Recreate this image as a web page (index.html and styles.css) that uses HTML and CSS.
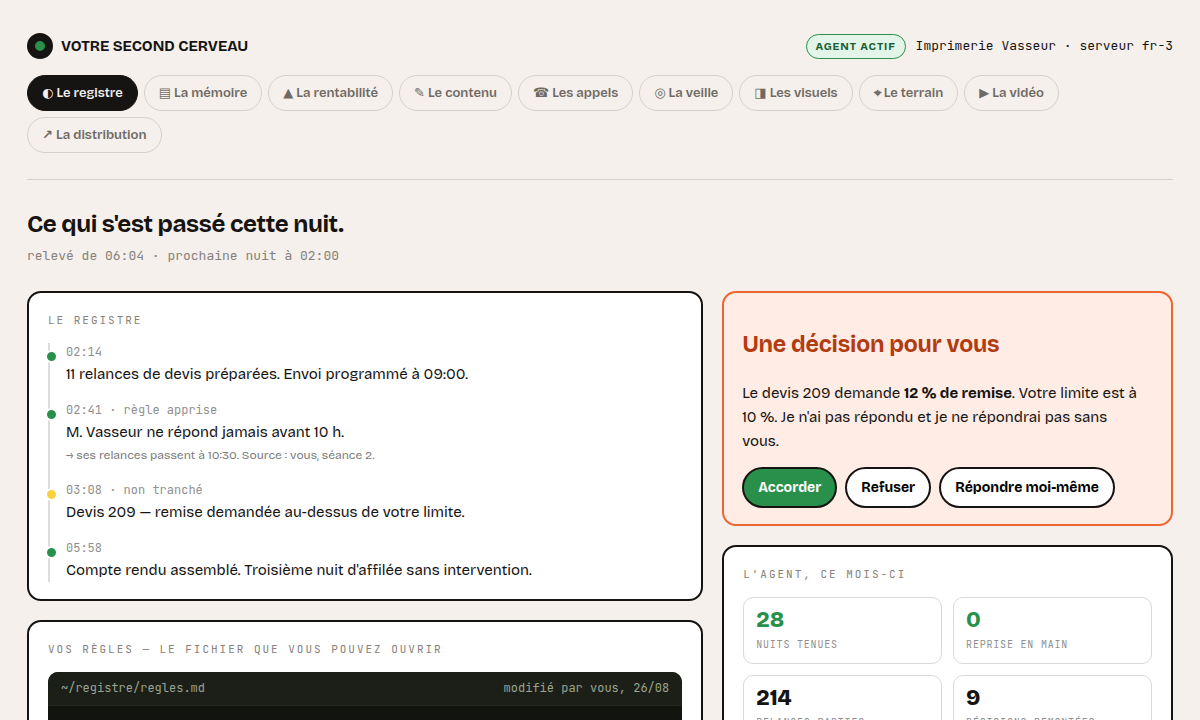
FILE: index.html
```html
<!DOCTYPE html>
<html lang="fr">
<head>
    <meta charset="UTF-8">
    <meta name="viewport" content="width=device-width, initial-scale=1.0">
    <title>Votre second cerveau</title>
    <link rel="stylesheet" href="styles.css">
</head>
<body>
    <header class="top">
        <div class="brand"><span class="logo"></span>VOTRE SECOND CERVEAU</div>
        <div class="status">
            <span class="badge">AGENT ACTIF</span>
            <span class="server">Imprimerie Vasseur · serveur fr-3</span>
        </div>
    </header>

    <nav class="tabs">
        <button class="tab active" type="button">◐ Le registre</button>
        <button class="tab" type="button">▤ La mémoire</button>
        <button class="tab" type="button">▲ La rentabilité</button>
        <button class="tab" type="button">✎ Le contenu</button>
        <button class="tab" type="button">☎ Les appels</button>
        <button class="tab" type="button">◎ La veille</button>
        <button class="tab" type="button">◨ Les visuels</button>
        <button class="tab" type="button">⌖ Le terrain</button>
        <button class="tab" type="button">▶ La vidéo</button>
        <button class="tab" type="button">↗ La distribution</button>
    </nav>

    <main>
        <h1>Ce qui s'est passé cette nuit.</h1>
        <p class="subtitle">relevé de 06:04 · prochaine nuit à 02:00</p>

        <div class="grid">
            <div class="column">
                <section class="card">
                    <h3 class="label">LE REGISTRE</h3>
                    <ol class="timeline">
                        <li class="event">
                            <time>02:14</time>
                            <p>11 relances de devis préparées. Envoi programmé à 09:00.</p>
                        </li>
                        <li class="event">
                            <time>02:41 · règle apprise</time>
                            <p>M. Vasseur ne répond jamais avant 10 h.</p>
                            <small>→ ses relances passent à 10:30. Source : vous, séance 2.</small>
                        </li>
                        <li class="event pending">
                            <time>03:08 · non tranché</time>
                            <p>Devis 209 — remise demandée au-dessus de votre limite.</p>
                        </li>
                        <li class="event">
                            <time>05:58</time>
                            <p>Compte rendu assemblé. Troisième nuit d'affilée sans intervention.</p>
                        </li>
                    </ol>
                </section>

                <section class="card">
                    <h3 class="label">VOS RÈGLES — LE FICHIER QUE VOUS POUVEZ OUVRIR</h3>
                    <div class="file">
                        <div class="file-head">
                            <span>~/registre/regles.md</span>
                            <span>modifié par vous, 26/08</span>
                        </div>
                        <div class="file-body"></div>
                    </div>
                </section>
            </div>

            <div class="column">
                <section class="card decision">
                    <h2>Une décision pour vous</h2>
                    <p>Le devis 209 demande <b>12 % de remise</b>. Votre limite est à 10 %. Je n'ai pas répondu et je ne répondrai pas sans vous.</p>
                    <div class="actions">
                        <button class="btn primary" type="button">Accorder</button>
                        <button class="btn" type="button">Refuser</button>
                        <button class="btn" type="button">Répondre moi-même</button>
                    </div>
                </section>

                <section class="card">
                    <h3 class="label">L'AGENT, CE MOIS-CI</h3>
                    <div class="stats">
                        <div class="stat good"><strong>28</strong><span>NUITS TENUES</span></div>
                        <div class="stat good"><strong>0</strong><span>REPRISE EN MAIN</span></div>
                        <div class="stat"><strong>214</strong><span>RELANCES PARTIES</span></div>
                        <div class="stat"><strong>9</strong><span>DÉCISIONS REMONTÉES</span></div>
                    </div>
                </section>
            </div>
        </div>
    </main>
</body>
</html>
```

FILE: styles.css
```css
:root {
    --ink: #161412;
    --paper: #f5f0eb;
    --line: #d5d0cb;
    --green: #28904a;
    --sans: "Bricolage Grotesque", "DejaVu Sans", sans-serif;
    --mono: "JetBrains Mono", "Liberation Mono", monospace;
}
*, *::before {
    box-sizing: border-box;
}
body {
    margin: 0;
    padding: 33px 27px;
    background: var(--paper);
    color: var(--ink);
    font-family: var(--sans);
    font-size: 15px;
    line-height: 24px;
}
h1, h2, h3, p, ol {
    margin: 0;
    padding: 0;
}
.top {
    display: flex;
    justify-content: space-between;
    align-items: center;
    margin-bottom: 16px;
}
.brand {
    display: flex;
    align-items: center;
    gap: 8px;
    font-weight: 700;
}
.logo {
    width: 26px;
    height: 26px;
    border: 8px solid var(--ink);
    border-radius: 50%;
    background: var(--green);
}
.status {
    display: flex;
    align-items: center;
    gap: 10px;
}
.badge {
    padding: 0 9px;
    border: 1px solid var(--green);
    border-radius: 99px;
    background: #e3f4e8;
    color: #17602f;
    font-size: 11px;
    font-weight: 700;
    line-height: 23px;
    letter-spacing: 0.08em;
}
.server {
    font-family: var(--mono);
    font-size: 13px;
}
.tabs {
    display: flex;
    flex-wrap: wrap;
    gap: 6px;
    padding-bottom: 26px;
    border-bottom: 1px solid var(--line);
}
.tab {
    padding: 0 14px;
    border: 1px solid var(--line);
    border-radius: 99px;
    background: transparent;
    color: #6e6963;
    font-family: var(--sans);
    font-size: 13px;
    font-weight: 600;
    line-height: 34px;
}
.tab.active {
    background: var(--ink);
    border-color: var(--ink);
    color: var(--paper);
}
h1 {
    margin-top: 28px;
    font-size: 24px;
    line-height: 32px;
    letter-spacing: -0.02em;
}
.subtitle {
    margin: 4px 0 23px;
    color: #86817b;
    font-family: var(--mono);
    font-size: 13px;
}
.grid {
    display: grid;
    grid-template-columns: 3fr 2fr;
    gap: 19px;
    align-items: start;
}
.column {
    display: grid;
    gap: 19px;
    min-width: 0;
}
.card {
    padding: 19px 19px 17px;
    border: 2px solid var(--ink);
    border-radius: 14px;
    background: #fff;
}
.label {
    margin-bottom: 14px;
    color: #86817b;
    font-family: var(--mono);
    font-size: 11px;
    font-weight: 400;
    line-height: 17px;
    letter-spacing: 0.18em;
}
.timeline {
    display: grid;
    gap: 15px;
    border-left: 2px solid #dcdcdc;
    padding-left: 16px;
    list-style: none;
}
.event {
    position: relative;
}
.event::before {
    content: "";
    position: absolute;
    left: -21px;
    top: 7px;
    width: 13px;
    height: 13px;
    border: 2px solid #fff;
    border-radius: 50%;
    background: var(--green);
}
.event.pending::before {
    background: #f9d33c;
}
.event time {
    display: block;
    color: #8f8f8f;
    font-family: var(--mono);
    font-size: 12px;
    line-height: 19px;
}
.event small {
    display: block;
    color: #7c7c7c;
    font-size: 12px;
    line-height: 22px;
}
.file {
    overflow: hidden;
    border-radius: 10px;
    background: #11140f;
}
.file-head {
    display: flex;
    justify-content: space-between;
    padding: 8px 13px;
    border-bottom: 1px solid #22261e;
    background: #1c1f18;
    color: #9aa392;
    font-family: var(--mono);
    font-size: 12px;
    line-height: 17px;
}
.file-body {
    min-height: 120px;
}
.decision {
    padding: 35px 18px 16px;
    border-color: #ed6530;
    background: #ffece4;
}
.decision h2 {
    margin-bottom: 19px;
    color: #b23c10;
    font-size: 23px;
    line-height: 34px;
    letter-spacing: -0.01em;
}
.decision p {
    padding-right: 8px;
}
.actions {
    display: flex;
    flex-wrap: wrap;
    gap: 8px;
    margin-top: 14px;
}
.btn {
    padding: 0 14px;
    border: 2px solid var(--ink);
    border-radius: 99px;
    background: #fff;
    color: #000;
    font-family: var(--sans);
    font-size: 14px;
    font-weight: 700;
    line-height: 37px;
}
.btn.primary {
    background: var(--green);
    color: #fff;
}
.stats {
    display: grid;
    grid-template-columns: 1fr 1fr;
    gap: 11px;
}
.stat {
    padding: 10px 12px;
    border: 1px solid #d9d9d9;
    border-radius: 10px;
}
.stat strong {
    display: block;
    font-size: 22px;
    font-weight: 800;
    line-height: 24px;
}
.stat span {
    display: block;
    margin-top: 4px;
    color: #8f8f8f;
    font-family: var(--mono);
    font-size: 10px;
    line-height: 17px;
    letter-spacing: 0.08em;
}
.stat.good strong {
    color: var(--green);
}
```
